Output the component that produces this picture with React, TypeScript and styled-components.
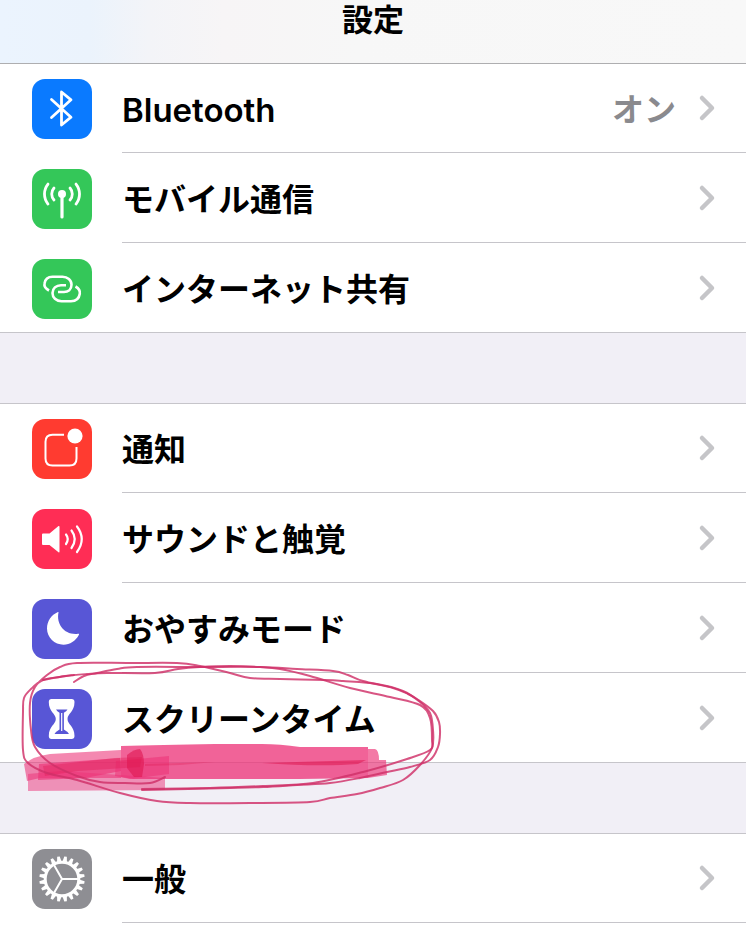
import React from 'react';
import styled, { createGlobalStyle } from 'styled-components';

const GlobalStyle = createGlobalStyle`
  * { box-sizing: border-box; }
  body {
    margin: 0;
    background: #f1eff6;
    color: #000;
    font-family: Inter, 'Noto Sans CJK JP', sans-serif;
    overflow-x: hidden;
  }
`;

const Screen = styled.div`
  min-height: 100vh;
  display: flex;
  flex-direction: column;
`;

const Header = styled.header`
  flex: none;
  height: 63px;
  padding-top: 2px;
  background: linear-gradient(90deg, #ebf4fe 0%, #ebf3fc 12%, #f3f4f8 20%, #f7f5f6 30%, #f7f7f7 48%, #f8f8f8 100%);
`;

const Title = styled.h1`
  margin: 0;
  font-size: 31px;
  line-height: 36px;
  font-weight: 700;
  text-align: center;
`;

const Sections = styled.main`
  flex: 1;
  display: flex;
  flex-direction: column;
  gap: 70px;
`;

const Group = styled.ul<{ $edge: string }>`
  margin: 0;
  padding: 0;
  list-style: none;
  background: #fff;
  box-shadow: inset 0 1px 0 ${(p) => p.$edge}, inset 0 -1px 0 #c6c5ca;

  &:last-child {
    flex: 1;
    box-shadow: inset 0 1px 0 ${(p) => p.$edge};
  }
`;

const Item = styled.li<{ $raised?: boolean }>`
  position: relative;
  z-index: ${(p) => (p.$raised ? 1 : 0)};
`;

const Row = styled.a`
  display: flex;
  height: 90px;
  padding-left: 32px;
  gap: 30px;
  color: inherit;
  text-decoration: none;
`;

const Tile = styled.span<{ $color: string }>`
  flex: none;
  width: 60px;
  height: 60px;
  margin-top: 16px;
  border-radius: 13px;
  background: ${(p) => p.$color};

  svg { display: block; }
`;

const Content = styled.span`
  flex: 1;
  display: flex;
  align-items: center;
  gap: 22px;
  padding-right: 30px;
  border-bottom: 1px solid #c6c5ca;
`;

const Label = styled.span<{ $latin: boolean }>`
  flex: 1;
  padding-top: 4px;
  font-size: ${(p) => (p.$latin ? 33 : 32)}px;
  line-height: 40px;
  font-weight: ${(p) => (p.$latin ? 600 : 700)};
`;

const Value = styled.span`
  padding-top: 4px;
  font-size: 32px;
  line-height: 40px;
  font-weight: 700;
  color: #8a8a8e;
`;

const Chevron = styled.svg`
  flex: none;
  display: block;
`;

const Marker = styled.svg`
  position: absolute;
  left: 0;
  top: -20px;
  pointer-events: none;
`;

const icons: Record<string, React.ReactNode> = {
  bluetooth: (
    <path d="M19.5 20.5 39 38.2 29.5 46V13L39 20.8 19.5 38.5" fill="none" strokeWidth="2.8" strokeLinejoin="round" strokeLinecap="round" />
  ),
  antenna: (
    <>
      <circle cx="30" cy="25" r="4" fill="#fff" stroke="none" />
      <path d="M30 26V48" strokeWidth="3.2" strokeLinecap="round" />
      <path d="M22 19a9 9 0 0 0 0 12M16 15a16 16 0 0 0 0 20M38 19a9 9 0 0 1 0 12M44 15a16 16 0 0 1 0 20" fill="none" strokeWidth="2.8" strokeLinecap="round" />
    </>
  ),
  hotspot: (
    <path d="M17 31.5C13.500 29.500 12 27 12.500 24.500C13.200 20 16.500 17.800 20.500 17.800H30.500C35.500 17.800 39.500 21 39.500 25.800C39.500 30.500 36 33 32 33H26M43.500 27.500C47 29.500 48.300 32 47.800 34.800C47 40 43.500 42.200 39 42.200H29.500C24 42.200 20.500 38.500 20.500 34C20.500 29.500 24 26.200 29 26.200H34" fill="none" strokeWidth="2.600" />
  ),
  notify: (
    <>
      <path d="M32 15.800H20.500Q13.500 15.800 13.500 22.800V39.500Q13.500 46.500 20.500 46.500H37.500Q44.500 46.500 44.500 39.500V28" fill="none" strokeWidth="2" />
      <circle cx="43" cy="17" r="7.600" fill="#fff" stroke="none" />
    </>
  ),
  sound: (
    <>
      <path d="M11 24.500h6.500L26.500 17Q27.500 16.500 27.500 18V42.500Q27.500 44 26.500 43.300L17.500 36H11Q10 36 10 35V25.500Q10 24.500 11 24.500Z" fill="#fff" stroke="none" />
      <path d="M34 25.500q3.500 4.500 0 9.500M39.500 21.500q6.500 8.500 0 17.500M45 17.500q9.500 12.500 0 25.500" fill="none" strokeWidth="2.2" strokeLinecap="round" />
    </>
  ),
  moon: (
    <path d="M26.500 13.500C24 25 32.500 36.500 46 34.800C47 34.600 47.300 35 46.800 36C43.500 42 38 45.700 31.500 45.700C22.500 45.700 15 38.500 15 29.500C15 22 19.500 15.800 25.500 13.200C26.300 12.800 26.700 12.900 26.500 13.500Z" fill="#fff" stroke="none" />
  ),
  hourglass: (
    <>
      <path d="M19.500 10H39.500Q42.500 10 42.500 13C42.500 23 35.500 24.500 35.500 30S42.500 37 42.500 47Q42.500 50 39.500 50H19.500Q16.800 50 16.800 47C16.800 37 23.800 35.500 23.800 30S16.800 23 16.800 13Q16.800 10 19.500 10Z" fill="#fff" stroke="none" />
      <path d="M24 20.500H35.500Q34.500 22.300 31.900 23.800V40.500Q35.500 42.500 37 45H22.500Q24 42.500 27.500 40.500V23.800Q25 22.300 24 20.500Z" fill="#5856d6" stroke="none" />
      <path d="M29.700 24V42" strokeWidth="1.200" />
    </>
  ),
  gear: (
    <>
      <circle cx="30" cy="30" r="16.800" fill="none" strokeWidth="3" />
      <path d="M30 30H46M30 30 22 16.100M30 30 22 43.900" strokeWidth="2" />
      {Array.from({ length: 20 }, (_, i) => (
        <path key={i} d="M27.700 13 28.700 7.300H31.300L32.300 13Z" fill="#fff" stroke="none" transform={`rotate(${i * 18 + 9} 30 30)`} />
      ))}
    </>
  ),
};

// Each pen stroke is a flat list of x, y pairs that is joined by a smooth curve.
const strokes: number[][] = [
  [74, 682, 84, 676, 97, 673, 117, 669, 137, 667, 200, 667, 260, 667, 297, 669, 333, 671, 348, 675, 363, 681, 393, 688, 408, 694, 417, 699, 433, 711, 439, 722, 440, 734, 438, 747, 430, 760, 410, 767, 387, 772, 360, 778, 330, 783, 297, 785, 263, 787, 230, 788, 142, 790],
  [74, 675, 60, 677, 43, 680, 31, 689, 24, 698, 23, 712, 23, 750, 28, 763, 47, 773, 77, 780, 120, 793, 157, 801, 190, 803, 250, 803, 310, 802, 330, 798, 357, 794, 380, 788, 403, 780, 420, 765, 432, 748, 433, 730, 430, 713, 420, 702, 403, 691, 377, 684, 343, 681, 325, 680, 280, 679, 250, 678, 230, 673, 200, 666, 177, 663, 130, 663, 77, 663, 60, 667, 47, 675, 35, 687, 30, 703, 31, 730, 35, 747, 50, 763, 77, 776, 100, 782, 125, 783, 150, 783, 165, 777],
  [43, 680, 65, 676, 87, 674, 107, 673, 155, 673, 178, 669, 200, 667, 230, 666, 260, 667, 280, 669, 310, 676, 350, 688, 390, 697, 420, 705, 430, 718, 432, 740, 430, 750, 407, 759, 363, 772, 313, 783, 263, 786, 210, 788, 142, 789],
];

function curve(p: number[]) {
  const n = p.length / 2;
  const at = (i: number) => {
    const k = Math.min(Math.max(i, 0), n - 1);
    return [p[k * 2], p[k * 2 + 1]];
  };
  let d = `M${p[0]} ${p[1]}`;
  for (let i = 0; i < n - 1; i++) {
    const [a, b, c, e] = [at(i - 1), at(i), at(i + 1), at(i + 2)];
    d += `C${b[0] + (c[0] - a[0]) / 6} ${b[1] + (c[1] - a[1]) / 6} ${c[0] - (e[0] - b[0]) / 6} ${c[1] - (e[1] - b[1]) / 6} ${c[0]} ${c[1]}`;
  }
  return d;
}

function Scribble() {
  return (
    <Marker width="450" height="170" viewBox="0 653 450 170" aria-hidden="true">
      <g fill="#ec3277">
        <path fillOpacity=".76" d="M121 746Q160 745 215 744H262Q280 744 300 747H368V778L300 779H133L121 777Z" />
        <path fillOpacity=".65" d="M368 749H375Q379 750 379 760H386L387 775 368 778Z" />
        <path fillOpacity=".58" d="M24 764Q34 756 50 754L121 750V778H40L27 781Z" />
        <path fillOpacity=".5" d="M28 774 60 771 165 778V790L28 791Z" />
        <path fillOpacity=".65" d="M39 764 120 758 121 771 85 778 38 780Z" />
        <path fillOpacity=".55" d="M116 761 169 756V774L130 779 115 776Z" />
      </g>
      <g fill="#df1650">
        <path fillOpacity=".6" d="M127 755Q134 749 140 749 144 754 144 764L142 777H134L127 768Z" />
        <path fillOpacity=".35" d="M43 766Q80 762 115 758L142 757 140 767 78 771 45 776Z" />
        <path fillOpacity=".55" d="M262 763 366 760 358 764Q320 767 262 763Z" />
        <path fillOpacity=".3" d="M145 764 215 762 180 765 145 766Z" />
      </g>
      <g fill="none" stroke="#cf2f68" strokeOpacity=".82" strokeWidth="2" strokeLinecap="round" strokeLinejoin="round">
        {strokes.map((points, i) => (
          <path key={i} d={curve(points)} />
        ))}
      </g>
    </Marker>
  );
}

type Entry = { icon: string; color: string; label: string; latin?: boolean; value?: string; marked?: boolean };

const groups: Entry[][] = [
  [
    { icon: 'bluetooth', color: '#0a7aff', label: 'Bluetooth', latin: true, value: 'オン' },
    { icon: 'antenna', color: '#34c759', label: 'モバイル通信' },
    { icon: 'hotspot', color: '#34c759', label: 'インターネット共有' },
  ],
  [
    { icon: 'notify', color: '#ff3b30', label: '通知' },
    { icon: 'sound', color: '#ff2d55', label: 'サウンドと触覚' },
    { icon: 'moon', color: '#5856d6', label: 'おやすみモード' },
    { icon: 'hourglass', color: '#5856d6', label: 'スクリーンタイム', marked: true },
  ],
  [{ icon: 'gear', color: '#8e8e93', label: '一般' }],
];

export default function App() {
  return (
    <Screen>
      <GlobalStyle />
      <Header>
        <Title>設定</Title>
      </Header>
      <Sections>
        {groups.map((entries, g) => (
          <Group key={g} $edge={g === 0 ? '#aeaeb0' : '#c6c5ca'}>
            {entries.map((entry) => (
              <Item key={entry.label} $raised={entry.marked}>
                <Row href="#">
                  <Tile $color={entry.color}>
                    <svg width="60" height="60" viewBox="0 0 60 60" stroke="#fff" aria-hidden="true">
                      {icons[entry.icon]}
                    </svg>
                  </Tile>
                  <Content>
                    <Label $latin={!!entry.latin}>{entry.label}</Label>
                    {entry.value && <Value>{entry.value}</Value>}
                    <Chevron width="18" height="28" viewBox="0 0 18 28" fill="none" stroke="#c5c5c8" strokeWidth="4.500" strokeLinecap="round" strokeLinejoin="round" aria-hidden="true">
                      <path d="M4 4 14 14 4 24" />
                    </Chevron>
                  </Content>
                </Row>
                {entry.marked && <Scribble />}
              </Item>
            ))}
          </Group>
        ))}
      </Sections>
    </Screen>
  );
}
